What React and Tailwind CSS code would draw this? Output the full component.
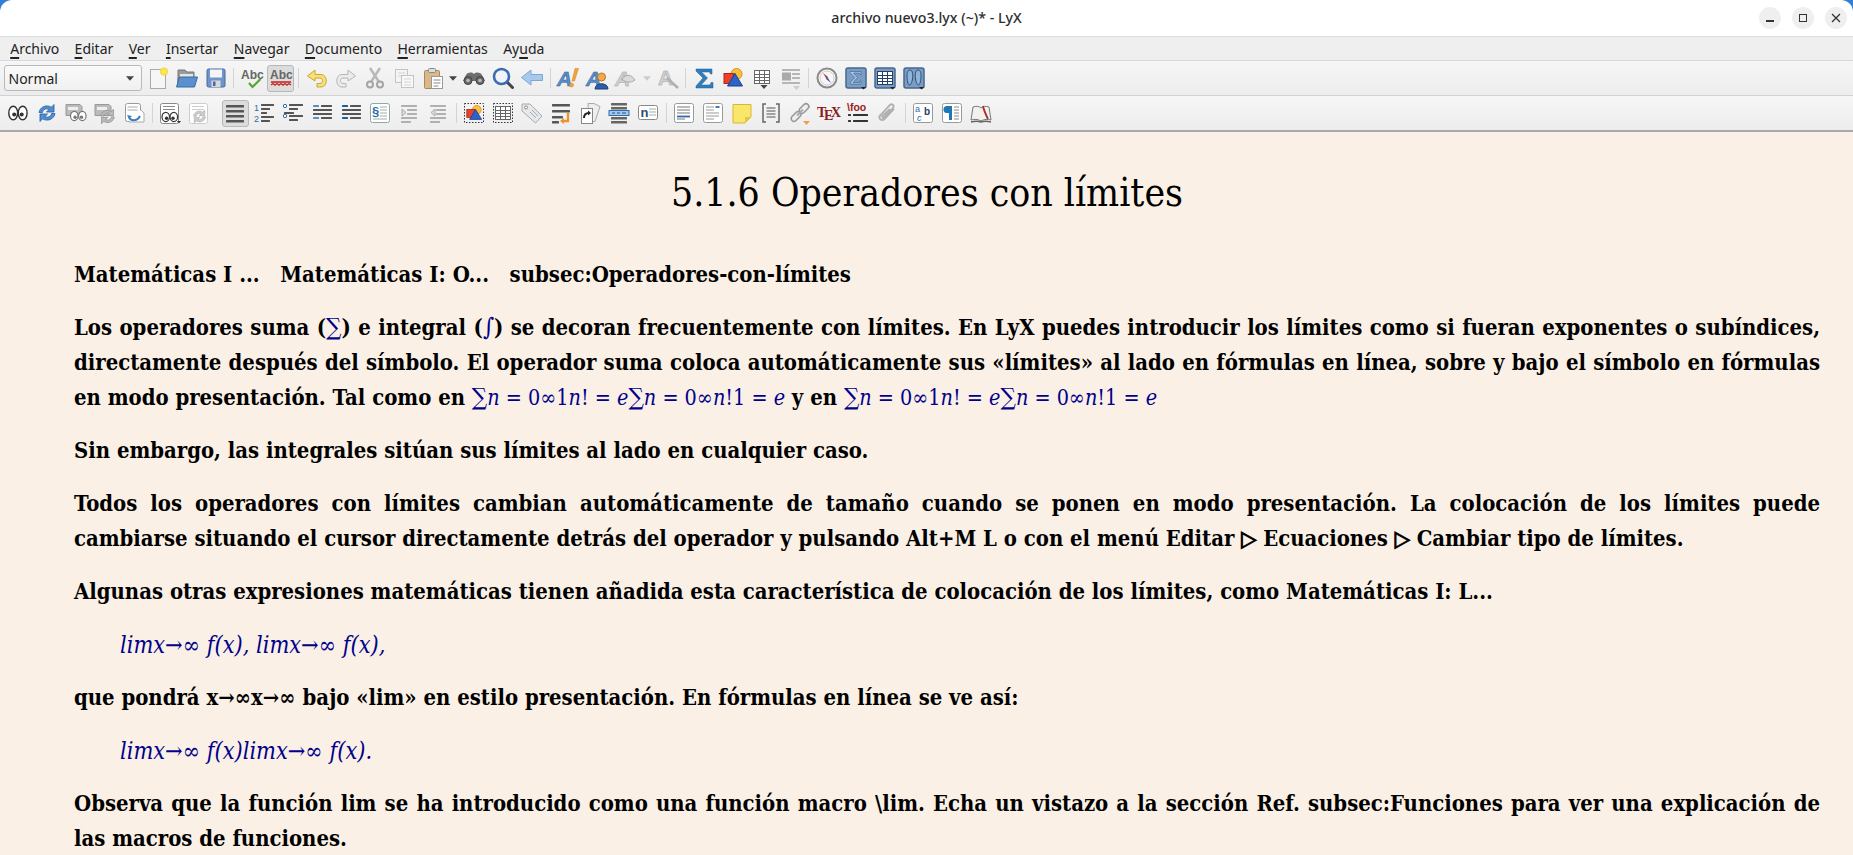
const Svg = ({ children }) => (
  <svg width="24" height="24" viewBox="0 0 24 24" fill="none">
    {children}
  </svg>
);

const Eyes = ({ x = 3, y = 5, s = 1, c = "#333", tall = 5.400 }) => (
  <g transform={`translate(${x} ${y}) scale(${s})`}>
    <ellipse cx="5" cy="7" rx="4.400" ry={tall} fill="#fff" stroke={c} strokeWidth="1.400" />
    <ellipse cx="14.500" cy="7" rx="4.400" ry={tall} fill="#fff" stroke={c} strokeWidth="1.400" />
    <circle cx="6" cy="8.500" r="2" fill={c} />
    <circle cx="13.500" cy="8.500" r="2" fill={c} />
  </g>
);

const Sync = ({ x = 2, y = 2, s = 1, c = "#4f8ed2", d = "#2a5c9e" }) => (
  <g transform={`translate(${x} ${y}) scale(${s})`}>
    <path d="M2 9.500C3 4 9 1 14.500 4.200L17 1.500V9h-7.500l2.600-2.600C9 5 6 6.500 5.500 9.500z" fill={c} stroke={d} strokeWidth="0.800" />
    <path d="M18 10.500C17 16 11 19 5.500 15.800L3 18.500V11h7.500l-2.600 2.600C11 15 14 13.500 14.500 10.500z" fill={c} stroke={d} strokeWidth="0.800" />
  </g>
);

const Page = ({ x = 3, y = 2, w = 18, h = 20, c = "#9a9a9a", children }) => (
  <>
    <rect x={x + 0.5} y={y + 0.5} width={w} height={h} rx="2" fill="#fff" stroke={c} />
    {children}
  </>
);

const Bars = ({ rows, c = "#555", h = 2 }) =>
  rows.map(([x, y, w, col], i) => <rect key={i} x={x} y={y} width={w} height={h} rx="0.5" fill={col || c} />);

const Shapes = () => (
  <>
    <circle cx="15.500" cy="8" r="5.500" fill="#f7c23c" stroke="#e58a1f" />
    <rect x="3" y="7.500" width="10" height="10" fill="#e8402c" stroke="#a52a1d" />
    <path d="M14 7.500L21.500 20H6.500z" fill="#2d62c9" stroke="#1c3f8a" />
  </>
);

const Dotted = ({ children }) => (
  <>
    <rect x="2.500" y="2.500" width="19" height="19" stroke="#333" strokeDasharray="1.500 1.500" />
    {children}
  </>
);

const Grid = ({ x = 4, y = 4, c = "#666" }) => (
  <g stroke={c}>
    <rect x={x + 0.5} y={y + 0.5} width="15" height="13" fill="#fff" />
    <path d={`M${x} ${y + 4.5}h16M${x} ${y + 7.5}h16M${x} ${y + 10.5}h16M${x + 5.5} ${y}v14M${x + 10.5} ${y}v14`} />
  </g>
);

const ABlue = ({ c = "#5b8cc6", o = "#2a5c9e" }) => (
  <text x="1" y="20" fontFamily="Liberation Sans" fontWeight="700" fontStyle="italic" fontSize="21" fill={c} stroke={o} strokeWidth="0.5">
    A
  </text>
);

const Pressed = ({ children }) => (
  <>
    <rect x="2" y="2" width="20" height="20" rx="2" fill="#7c9cc2" stroke="#46678f" strokeWidth="1.500" />
    {children}
    <path d="M17 21h5l-2.500 2.500z" fill="#222" />
  </>
);

const Caret = ({ c = "#444" }) => <path d="M0 0h7l-3.500 4z" fill={c} />;

const icons = {
  newDoc: (
    <Svg>
      <rect x="4.500" y="3.500" width="15" height="19" fill="#f6f6f4" stroke="#aaa" />
      <circle cx="18" cy="5.500" r="3.600" fill="#f9e84b" stroke="#f3d43a" />
    </Svg>
  ),
  open: (
    <Svg>
      <path d="M3 20V4h7l2 2h7v6H3z" fill="#9a9a9a" stroke="#777" />
      <path d="M5 8h13v4H5z" fill="#e5e5e5" />
      <path d="M1.500 21L4.500 11h18l-3 10z" fill="#5b8fce" stroke="#3a6aa8" />
    </Svg>
  ),
  save: (
    <Svg>
      <rect x="3" y="3" width="18" height="18" rx="1.500" fill="#6f94cc" stroke="#46699e" />
      <rect x="6" y="3.500" width="12" height="8" fill="#f4f4f4" />
      <rect x="7.500" y="14.500" width="9" height="6.500" fill="#d8d8d8" />
      <rect x="9" y="15.500" width="2.500" height="4.500" fill="#46699e" />
    </Svg>
  ),
  spell: (
    <Svg>
      <text x="1" y="13" fontFamily="Liberation Sans" fontWeight="700" fontSize="12" fill="#666">Abc</text>
      <path d="M9 17l3.500 4 8-8" stroke="#57a52f" strokeWidth="2.200" fill="none" />
    </Svg>
  ),
  spellOn: (
    <Svg>
      <text x="1" y="13" fontFamily="Liberation Sans" fontWeight="700" fontSize="12" fill="#666">Abc</text>
      <path d="M2 16h20" stroke="#c82828" strokeWidth="1.600" />
      <path d="M2 19l2-1.500 2 1.500 2-1.500 2 1.500 2-1.500 2 1.500 2-1.500 2 1.500 2-1.500 2 1.500" stroke="#c82828" strokeWidth="1.400" />
    </Svg>
  ),
  undo: (
    <Svg>
      <path d="M10 4L2.500 10 10 15v-3h5c3.500 0 3.500 5.500 0 5.500h-3V21h4c7 0 7-12.500 0-12.500h-6z" fill="#f6e27a" stroke="#cfa52a" />
    </Svg>
  ),
  redo: (
    <Svg>
      <path d="M14 4l7.500 6L14 15v-3H9c-3.500 0-3.500 5.500 0 5.500h3V21H8c-7 0-7-12.500 0-12.500h6z" fill="#ececec" stroke="#b5b5b5" />
    </Svg>
  ),
  cut: (
    <Svg>
      <path d="M7 2l9 14M17 2L8 16" stroke="#b8b8b8" strokeWidth="2.400" />
      <circle cx="7" cy="18.500" r="3" stroke="#a5a5a5" strokeWidth="2" fill="#eee" />
      <circle cx="17" cy="18.500" r="3" stroke="#a5a5a5" strokeWidth="2" fill="#eee" />
    </Svg>
  ),
  copy: (
    <Svg>
      <rect x="3.500" y="3.500" width="12" height="13" fill="#f4f4f4" stroke="#c4c4c4" />
      <rect x="9.500" y="9.500" width="12" height="12" fill="#f8f8f8" stroke="#c4c4c4" />
      <path d="M6 7h7M6 10h3M12 13h7M12 16h7M12 19h7" stroke="#d4d4d4" />
    </Svg>
  ),
  paste: (
    <Svg>
      <rect x="3.500" y="4.500" width="15" height="18" rx="1" fill="#d8b987" stroke="#a88a5c" />
      <rect x="7.500" y="2.500" width="7" height="4" rx="1" fill="#ddd" stroke="#888" />
      <rect x="10.500" y="10.500" width="11" height="12" fill="#fff" stroke="#999" />
      <path d="M12.500 14h7M12.500 17h7M12.500 20h5" stroke="#888" />
    </Svg>
  ),
  binoculars: (
    <Svg>
      <path d="M4 9c2-3 6-3 8-1 2-2 6-2 8 1l3 6H1z" fill="#6e6e6e" />
      <circle cx="6" cy="14.500" r="4" fill="#666" stroke="#444" />
      <circle cx="18" cy="14.500" r="4" fill="#666" stroke="#444" />
      <circle cx="6" cy="14.500" r="1.800" fill="#bbb" />
      <circle cx="18" cy="14.500" r="1.800" fill="#bbb" />
    </Svg>
  ),
  search: (
    <Svg>
      <path d="M15 15l6.500 6.500" stroke="#444" strokeWidth="3" strokeLinecap="round" />
      <circle cx="10.500" cy="10.500" r="7.500" fill="#f0f4fa" stroke="#3a6cb4" strokeWidth="2.600" />
    </Svg>
  ),
  back: (
    <Svg>
      <path d="M11 4L1.500 11.500 11 19v-4.500h11.500v-6H11z" fill="#a9c9ec" stroke="#7ea6d2" />
    </Svg>
  ),
  aBang: (
    <Svg>
      <ABlue />
      <path d="M19 2.500h3.500L18.500 15h-2.500z" fill="#f2a33a" stroke="#d17f1e" strokeWidth="0.500" />
      <circle cx="15.500" cy="19" r="2" fill="#f2a33a" stroke="#d17f1e" strokeWidth="0.500" />
    </Svg>
  ),
  aUser: (
    <Svg>
      <ABlue />
      <circle cx="16.500" cy="11" r="4" fill="#f2a94e" stroke="#b97420" />
      <path d="M10 23c0-7 13-7 13 0z" fill="#2d5ea6" stroke="#1d3f78" />
    </Svg>
  ),
  aGrey: (
    <Svg>
      <ABlue c="#d0d0d0" o="#a0a0a0" />
      <path d="M8 13c4-5 9-5 13 1-4 3-9 3-13-1z" fill="#dadada" stroke="#aaa" />
    </Svg>
  ),
  aTool: (
    <Svg>
      <text x="2" y="19" fontFamily="Liberation Sans" fontWeight="700" fontSize="21" fill="#d0d0d0" stroke="#a0a0a0" strokeWidth="0.500">A</text>
      <path d="M11 12l11 10" stroke="#b0b0b0" strokeWidth="2.500" />
    </Svg>
  ),
  sigma: (
    <Svg>
      <path d="M4 3h16v5h-1.500l-1-2H9.500l6 6-6.500 7h9l1-2.500H21V22H4v-2l7-8-7-7z" fill="#2f7ebd" stroke="#1d5c91" strokeWidth="0.500" />
    </Svg>
  ),
  shapes: (
    <Svg>
      <Shapes />
    </Svg>
  ),
  tableDrop: (
    <Svg>
      <Grid />
      <g transform="translate(10.500 19)">
        <Caret />
      </g>
    </Svg>
  ),
  floatDrop: (
    <Svg>
      <Bars c="#b5b5b5" rows={[[3, 3, 18], [13, 7, 8], [13, 11, 8], [3, 16, 18]]} />
      <rect x="3" y="6.500" width="9" height="8" fill="#aaa" />
      <g transform="translate(14 20)">
        <Caret c="#ccc" />
      </g>
    </Svg>
  ),
  compass: (
    <Svg>
      <circle cx="12" cy="12" r="9.500" fill="#f8f8f8" stroke="#8a8a8a" strokeWidth="2" />
      <circle cx="12" cy="12" r="7" stroke="#ccc" />
      <path d="M8 7l5 4-1.500 2z" fill="#c62f2f" />
      <path d="M16 17l-5-4 1.500-2z" fill="#3564ad" />
    </Svg>
  ),
  mathPanel: (
    <Svg>
      <Pressed>
        <path d="M6 5.500h11v3h-1l-.5-1.500h-6l4 4.500-4.500 5h6.500l.5-1.500h1v3H6v-1l5-5.500-5-5z" fill="#a8d0ee" stroke="#1c4a80" strokeWidth="0.500" />
      </Pressed>
    </Svg>
  ),
  tablePanel: (
    <Svg>
      <Pressed>
        <Grid x={4} y={5} c="#1f3f68" />
      </Pressed>
    </Svg>
  ),
  feetPanel: (
    <Svg>
      <Pressed>
        <path d="M8 4c3 0 3 6 2.500 9-.5 3-1.500 6-3 6S5 14 5 10s1-6 3-6zM16 4c-3 0-3 6-2.500 9 .5 3 1.500 6 3 6s2.500-5 2.500-9-1-6-3-6z" fill="#90b4d8" stroke="#2c5078" />
      </Pressed>
    </Svg>
  ),
  eyes: (
    <Svg>
      <Eyes x={2.200} y={5} tall={6.800} />
    </Svg>
  ),
  sync: (
    <Svg>
      <Sync />
    </Svg>
  ),
  folderEyes: (
    <Svg>
      <path d="M2 3.500h14l2 2v9H2z" fill="#bbb" stroke="#999" />
      <path d="M4 6h10v3H4z" fill="#eee" />
      <Eyes x={6} y={9} s={0.85} c="#777" />
    </Svg>
  ),
  folderSync: (
    <Svg>
      <path d="M2 3.500h14l2 2v9H2z" fill="#bbb" stroke="#999" />
      <path d="M4 6h10v3H4z" fill="#eee" />
      <Sync x={6} y={7} s={0.85} c="#bbb" d="#888" />
    </Svg>
  ),
  docSync: (
    <Svg>
      <Page x={3} y={2} w={15} h={18}>
        <path d="M5.500 6h10M5.500 9h10" stroke="#aaa" />
      </Page>
      <path d="M7 21h15V12l-3-3" fill="#fff" stroke="#aaa" />
      <path d="M7 16c1 4 8 5 11-1" stroke="#3d7fc4" strokeWidth="2" />
      <path d="M5 14l2 4 3-3z" fill="#3d7fc4" />
    </Svg>
  ),
  pageEyes: (
    <Svg>
      <Page x={2} y={2} w={18} h={20} c="#888">
        <path d="M5 5.500h12M5 8.500h12" stroke="#888" />
      </Page>
      <Eyes x={3.500} y={10} s={0.85} />
      <path d="M19 20h4l-2 2.500z" fill="#333" />
    </Svg>
  ),
  pageSync: (
    <Svg>
      <Page x={2} y={2} w={18} h={20} c="#ccc">
        <path d="M5 5.500h12M5 8.500h12" stroke="#ccc" />
      </Page>
      <Sync x={5} y={8} s={0.75} c="#ccc" d="#aaa" />
    </Svg>
  ),
  alignFull: (
    <Svg>
      <Bars c="#555" h={2.500} rows={[[3, 4, 18], [3, 9, 18], [3, 14, 18], [3, 19, 18]]} />
    </Svg>
  ),
  numbered: (
    <Svg>
      <text x="2" y="10" fontFamily="Liberation Sans" fontSize="9" fill="#2f6ca8">1</text>
      <text x="2" y="21" fontFamily="Liberation Sans" fontSize="9" fill="#2f6ca8">2</text>
      <Bars rows={[[9, 3, 13], [9, 7, 9], [9, 11, 6], [9, 15, 13], [9, 19, 9]]} />
    </Svg>
  ),
  bullets: (
    <Svg>
      <circle cx="4" cy="5" r="1.700" fill="#fff" stroke="#2f6ca8" />
      <circle cx="4" cy="15" r="1.700" fill="#fff" stroke="#2f6ca8" />
      <Bars rows={[[8, 3, 14], [8, 7, 9], [3, 11, 10], [8, 14, 14], [8, 18, 9]]} />
    </Svg>
  ),
  descr: (
    <Svg>
      <Bars rows={[[3, 4, 6, "#5a90c0"], [11, 4, 11], [3, 8, 19], [3, 12, 19], [3, 16, 6, "#5a90c0"], [11, 16, 11]]} />
    </Svg>
  ),
  descr2: (
    <Svg>
      <Bars rows={[[3, 4, 6, "#1f5f98"], [11, 4, 11], [3, 8, 19], [3, 12, 19], [3, 16, 6, "#1f5f98"], [11, 16, 11]]} />
    </Svg>
  ),
  section: (
    <Svg>
      <Page x={2} y={2} w={19} h={19} c="#8aa">
        <text x="4" y="15" fontFamily="Liberation Sans" fontWeight="700" fontSize="13" fill="#2f6ca8">§</text>
        <path d="M12 6h7M12 9h7M12 12h7M12 15h7M5 18h14" stroke="#aaa" />
      </Page>
    </Svg>
  ),
  depthLess: (
    <Svg>
      <Bars c="#b0b0b0" rows={[[4, 4, 16], [10, 8, 10], [10, 12, 10], [4, 16, 16], [4, 20, 10]]} />
      <path d="M5 8l4 3.500L5 15z" fill="#ddd" stroke="#aaa" />
    </Svg>
  ),
  depthMore: (
    <Svg>
      <Bars c="#b0b0b0" rows={[[4, 4, 16], [10, 8, 10], [10, 12, 10], [4, 16, 16], [4, 20, 10]]} />
      <path d="M9 8l-4 3.500L9 15z" fill="#ddd" stroke="#aaa" />
    </Svg>
  ),
  dottedShapes: (
    <Svg>
      <Dotted>
        <g transform="translate(2.400 2.400) scale(0.8)">
          <Shapes />
        </g>
      </Dotted>
    </Svg>
  ),
  dottedTable: (
    <Svg>
      <Dotted>
        <Grid x={4} y={5} />
      </Dotted>
    </Svg>
  ),
  label: (
    <Svg>
      <path d="M2 3h8l12 12-6.500 7L2 10z" fill="#e8e8e8" stroke="#aaa" />
      <circle cx="6" cy="6.500" r="1.500" fill="#fff" stroke="#888" />
      <path d="M10 11l6 6M12 9l6 6" stroke="#8fb0c8" />
    </Svg>
  ),
  returnArrow: (
    <Svg>
      <Bars c="#555" h={2.500} rows={[[3, 3, 18], [3, 9, 18], [3, 15, 11], [3, 20, 7]]} />
      <path d="M19 12v8h-6" stroke="#e89530" strokeWidth="2.400" />
      <path d="M11 20l4-3v6z" fill="#e89530" />
    </Svg>
  ),
  pages: (
    <Svg>
      <path d="M10 2.500h6l6 3-5 15H11z" fill="#eee" stroke="#aaa" />
      <rect x="3.500" y="7.500" width="11" height="15" fill="#fff" stroke="#888" />
      <path d="M6 17c0-3 2-5 5-5" stroke="#222" strokeWidth="2" />
      <path d="M10 9.500l3 2.500-3 2.500z" fill="#222" />
    </Svg>
  ),
  rows: (
    <Svg>
      <Bars c="#666" h={2.500} rows={[[4, 2, 16], [4, 6, 16], [4, 16, 16], [4, 20, 16]]} />
      <rect x="2" y="9.500" width="20" height="5" fill="#a9c9ec" stroke="#2f6ca8" />
      <path d="M5 12h3M10 12h3M15 12h4" stroke="#1f4f92" />
    </Svg>
  ),
  noteN: (
    <Svg>
      <rect x="2.500" y="4.500" width="19" height="14" rx="2" fill="#fff" stroke="#888" />
      <text x="4.500" y="16" fontFamily="Liberation Sans" fontWeight="700" fontSize="13" fill="#2a4f78">n</text>
      <path d="M13 8h7M13 11h7M13 14h7" stroke="#aaa" />
    </Svg>
  ),
  docBlueLow: (
    <Svg>
      <Page x={2} y={2} w={19} h={19}>
        <path d="M5 6h13M5 9h13M5 12h13" stroke="#777" />
        <path d="M5 15.500h13" stroke="#2f6ca8" strokeWidth="1.800" />
        <path d="M5 18h8" stroke="#777" />
      </Page>
    </Svg>
  ),
  docBlueHigh: (
    <Svg>
      <Page x={2} y={2} w={19} h={19}>
        <path d="M5 6h8M5 9h8M5 12h13M5 15h13M5 18h8" stroke="#999" />
        <path d="M14.500 6h4" stroke="#2f6ca8" strokeWidth="1.800" />
      </Page>
    </Svg>
  ),
  note: (
    <Svg>
      <path d="M3 3.500h18V16l-6 6H3z" fill="#fbe66c" stroke="#d8b82e" />
      <path d="M21 16h-6v6z" fill="#e6c93e" />
    </Svg>
  ),
  brackets: (
    <Svg>
      <path d="M7 3H4v18h3M17 3h3v18h-3" stroke="#666" strokeWidth="1.500" />
      <path d="M7.500 7h9M7.500 10h9M7.500 13h9M7.500 16h9" stroke="#888" strokeWidth="1.300" />
    </Svg>
  ),
  link: (
    <Svg>
      <path d="M4 15.500l4-4a2.800 2.800 0 014 4l-4 4a2.800 2.800 0 01-4-4z" fill="#eee" stroke="#999" strokeWidth="1.600" />
      <path d="M12 7.500l4-4a2.800 2.800 0 014 4l-4 4a2.800 2.800 0 01-4-4z" fill="#eee" stroke="#999" strokeWidth="1.600" />
      <path d="M9 14.500l6-6" stroke="#aaa" strokeWidth="2" />
      <g transform="translate(15 20)">
        <Caret c="#f0a040" />
      </g>
    </Svg>
  ),
  tex: (
    <Svg>
      <text x="0" y="16" fontFamily="Liberation Serif" fontWeight="700" fontSize="14" fill="#8b1a1a">T</text>
      <text x="7" y="19" fontFamily="Liberation Serif" fontWeight="700" fontSize="14" fill="#8b1a1a">E</text>
      <text x="14" y="16" fontFamily="Liberation Serif" fontWeight="700" fontSize="14" fill="#8b1a1a">X</text>
    </Svg>
  ),
  foo: (
    <Svg>
      <text x="1" y="10" fontFamily="Liberation Sans" fontWeight="700" fontSize="10.500" fill="#9b1c1c">\foo</text>
      <Bars c="#333" rows={[[2, 13, 3], [7, 13, 15], [2, 19, 3], [7, 19, 15]]} />
    </Svg>
  ),
  clip: (
    <Svg>
      <path d="M19 8L9.500 18c-3 3-7-1-4-4L15 4c2-2 5 1 3 3l-9 9.500c-1 1-2.500-.5-1.500-1.500L15 8" stroke="#b0b0b0" strokeWidth="1.800" />
    </Svg>
  ),
  abc: (
    <Svg>
      <rect x="2.500" y="2.500" width="19" height="19" rx="2" fill="#fff" stroke="#999" />
      <text x="4" y="11" fontFamily="Liberation Sans" fontSize="9" fill="#2f6ca8">a</text>
      <text x="13" y="14" fontFamily="Liberation Sans" fontWeight="700" fontSize="10" fill="#1f3f68">b</text>
      <text x="6" y="20" fontFamily="Liberation Sans" fontStyle="italic" fontSize="9" fill="#2f6ca8">c</text>
    </Svg>
  ),
  pilcrow: (
    <Svg>
      <rect x="2.500" y="2.500" width="19" height="19" rx="2" fill="#fff" stroke="#999" />
      <path d="M9 5H7a3.500 3.500 0 000 7h2v7h3V5z" fill="#1f78b4" />
      <path d="M14 6h5M14 9h5M14 12h5M14 15h5M14 18h5" stroke="#888" />
    </Svg>
  ),
  book: (
    <Svg>
      <path d="M2 19L4 6c3-1 6-1 8 1 2-2 5-2 8-1l2 13c-3-1-7-1-10 1-3-2-7-2-10-1z" fill="#f4f0ec" stroke="#777" />
      <path d="M14 5c1 5 3 9 5 13" stroke="#b02a2a" strokeWidth="1.800" />
      <path d="M2 21c4-1 7-1 10 0 3-1 6-1 10 0" stroke="#666" strokeWidth="1.500" />
    </Svg>
  ),
};

const Btn = ({ icon, active }) => (
  <div className="flex h-full w-[29px] shrink-0 items-center justify-center">
    <div className={active ? "flex h-[27px] w-[27px] items-center justify-center rounded-[3px] border border-[#b8b8b8] bg-[#dcdcdc]" : "flex h-[27px] w-[27px] items-center justify-center"}>
      {icons[icon]}
    </div>
  </div>
);

const Sep = ({ hidden }) => (
  <div className="flex h-full w-[7px] shrink-0 items-center justify-center">
    {!hidden && <div className="h-[20px] w-px bg-[#d4d4d4]" />}
  </div>
);

const Drop = ({ dim }) => (
  <div className="flex h-full w-[12.5px] shrink-0 items-center justify-center">
    <svg width="8" height="5" viewBox="0 0 7 4">
      <Caret c={dim ? "#ccc" : "#444"} />
    </svg>
  </div>
);

const Bar = ({ items, children, className = "h-[35px] border-b border-[#d2d2d2]" }) => (
  <div className={"flex items-center bg-gradient-to-b from-[#f6f6f6] to-[#ededed] pl-[3.5px] " + className}>
    {children}
    {items.map((it, i) => {
      if (it === "|") return <Sep key={i} />;
      if (it === "_") return <Sep key={i} hidden />;
      if (it === "v") return <Drop key={i} />;
      if (it === "w") return <Drop key={i} dim />;
      if (it.endsWith("*")) return <Btn key={i} icon={it.slice(0, -1)} active />;
      return <Btn key={i} icon={it} />;
    })}
  </div>
);

const row1 = ["newDoc", "open", "save", "|", "spell", "spellOn*", "|", "undo", "redo", "cut", "copy", "paste", "v", "binoculars", "search", "back", "|", "aBang", "aUser", "aGrey", "w", "aTool", "|", "sigma", "shapes", "tableDrop", "floatDrop", "|", "compass", "mathPanel", "tablePanel", "feetPanel"];
const row2 = ["eyes", "sync", "folderEyes", "folderSync", "docSync", "|", "pageEyes", "pageSync", "_", "alignFull*", "numbered", "bullets", "descr", "descr2", "section", "depthLess", "depthMore", "|", "dottedShapes", "dottedTable", "label", "returnArrow", "pages", "rows", "noteN", "|", "docBlueLow", "docBlueHigh", "note", "brackets", "link", "tex", "foo", "clip", "|", "abc", "pilcrow", "book"];

const U = ({ children }) => <span className="underline decoration-2 underline-offset-[3px]">{children}</span>;

const menus = [
  [<U key="u">A</U>, "rchivo"],
  [<U key="u">E</U>, "ditar"],
  [<U key="u">V</U>, "er"],
  [<U key="u">I</U>, "nsertar"],
  [<U key="u">N</U>, "avegar"],
  [<U key="u">D</U>, "ocumento"],
  [<U key="u">H</U>, "erramientas"],
  ["Ay", <U key="u">u</U>, "da"],
];

const M = ({ children }) => <span className="text-[21.4px] font-normal leading-[0] text-[#00008b]">{children}</span>;
const Big = ({ children }) => <span className="text-[24px] leading-[0]">{children}</span>;
const I = ({ children }) => <i>{children}</i>;

const SumA = () => (
  <M>
    <Big>∑</Big><I>n</I> = 0∞1<I>n</I>! = <I>e</I><Big>∑</Big><I>n</I> = 0∞<I>n</I>!1 = <I>e</I>
  </M>
);

const Just = ({ children }) => <div className="[text-align-last:justify]">{children}</div>;

const Para = ({ children }) => <div className="mt-[18px] whitespace-nowrap">{children}</div>;

const Limit = ({ children }) => (
  <div className="mt-[18px] pl-[46px] text-[23.3px] font-normal italic text-[#00008b]">{children}</div>
);

const Tri = () => <span className="[-webkit-text-stroke:1px_black]">▷</span>;

export default function App() {
  return (
    <div className="h-[855px] w-[1853px] overflow-hidden bg-[#2f7fd6]">
      {/* title bar */}
      <div className="relative flex h-[37px] items-center justify-center rounded-t-[12px] border-b border-[#dcdcdc] bg-white font-['Noto_Sans',sans-serif] text-[14.2px] font-medium text-[#2d2d2d]">
        archivo nuevo3.lyx (~)* - LyX
        <div className="absolute right-[6px] top-[7px] flex gap-[11px]">
          <div className="flex h-[22px] w-[22px] items-center justify-center rounded-full bg-[#efefef]">
            <div className="mt-[6px] h-[1.5px] w-[8px] bg-[#333]" />
          </div>
          <div className="flex h-[22px] w-[22px] items-center justify-center rounded-full bg-[#efefef]">
            <div className="h-[8px] w-[8px] border border-[#333]" />
          </div>
          <div className="flex h-[22px] w-[22px] items-center justify-center rounded-full bg-[#efefef]">
            <svg width="10" height="10" viewBox="0 0 10 10">
              <path d="M1 1l8 8M9 1l-8 8" stroke="#333" strokeWidth="1.300" />
            </svg>
          </div>
        </div>
      </div>

      {/* menu */}
      <div className="flex h-[24px] items-center border-b border-[#d8d8d8] bg-[#efefef] pl-[2.5px] font-['Noto_Sans',sans-serif] text-[14px] leading-[18px] text-[#222]">
        {menus.map((m, i) => (
          <span key={i} className="px-[7.7px]">
            {m}
          </span>
        ))}
      </div>

      {/* toolbars */}
      <Bar items={row1}>
        <div className="mr-[1.5px] flex h-[26px] w-[138px] shrink-0 items-center justify-between rounded-[3px] border border-[#b9b9b9] bg-gradient-to-b from-[#fafafa] to-[#f0f0f0] pl-[4px] pr-[7px] font-['Noto_Sans',sans-serif] text-[14px] text-[#222]">
          Normal
          <svg width="8" height="5" viewBox="0 0 7 4">
            <Caret />
          </svg>
        </div>
      </Bar>
      <Bar items={row2} className="h-[36px] border-b-2 border-[#a9a9a9]" />

      {/* document */}
      <div className="h-[723px] bg-[#faf0e6] pl-[74px] pr-[33px] font-['DejaVu_Serif_Condensed','DejaVu_Serif',serif] text-[21.9px] font-bold leading-[35px] text-black">
        <h1 className="pb-[26px] pr-[40px] pt-[41px] text-center text-[38.8px] font-normal leading-[40px]">
          5.1.6 Operadores con límites
        </h1>
        <div className="mt-[18px] whitespace-pre">Matemáticas I ...   Matemáticas I: O...   subsec:Operadores-con-límites</div>
        <div className="mt-[18px]">
          <Just>
            Los operadores suma (<M><Big>∑</Big></M>) e integral (<M><Big>∫</Big></M>) se decoran frecuentemente con límites. En LyX puedes introducir los límites como si fueran exponentes o subíndices,
          </Just>
          <Just>
            directamente después del símbolo. El operador suma coloca automáticamente sus «límites» al lado en fórmulas en línea, sobre y bajo el símbolo en fórmulas
          </Just>
          <div className="whitespace-nowrap">
            en modo presentación. Tal como en <SumA /> y en <SumA />
          </div>
        </div>
        <Para>Sin embargo, las integrales sitúan sus límites al lado en cualquier caso.</Para>
        <div className="mt-[18px]">
          <Just>
            Todos los operadores con límites cambian automáticamente de tamaño cuando se ponen en modo presentación. La colocación de los límites puede
          </Just>
          <div className="whitespace-nowrap">
            cambiarse situando el cursor directamente detrás del operador y pulsando Alt+M L o con el menú Editar <Tri /> Ecuaciones <Tri /> Cambiar tipo de límites.
          </div>
        </div>
        <Para>Algunas otras expresiones matemáticas tienen añadida esta característica de colocación de los límites, como Matemáticas I: L...</Para>
        <Limit>limx→∞ f(x), limx→∞ f(x),</Limit>
        <Para>que pondrá x→∞x→∞ bajo «lim» en estilo presentación. En fórmulas en línea se ve así:</Para>
        <Limit>limx→∞ f(x)limx→∞ f(x).</Limit>
        <div className="mt-[18px]">
          <Just>
            Observa que la función lim se ha introducido como una función macro \lim. Echa un vistazo a la sección Ref. subsec:Funciones para ver una explicación de
          </Just>
          <div>las macros de funciones.</div>
        </div>
      </div>
    </div>
  );
}
